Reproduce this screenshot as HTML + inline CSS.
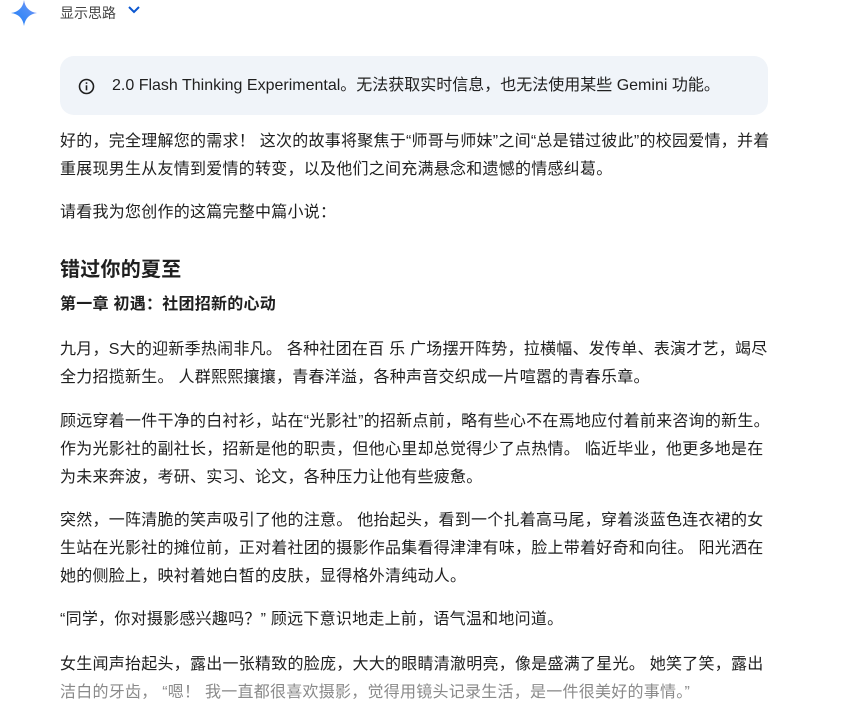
<!DOCTYPE html>
<html><head><meta charset="utf-8"><style>
body{margin:0;width:851px;height:707px;overflow:hidden;background:#fff;font-family:"Liberation Sans","Noto Sans CJK SC",sans-serif;color:#1f1f1f;position:relative}
.l{position:absolute;left:60px;white-space:nowrap;font-size:16px;line-height:28px;letter-spacing:0.25px}
</style></head><body>
<svg style="position:absolute;left:11px;top:0px" width="26" height="26" viewBox="0 0 28 28"><defs><linearGradient id="g" x1="0" y1="1" x2="1" y2="0"><stop offset="0" stop-color="#1c7df5"/><stop offset="0.6" stop-color="#4d8ff7"/><stop offset="1" stop-color="#a48ff0"/></linearGradient></defs><path d="M14 0 C15 8 20 13 28 14 C20 15 15 20 14 28 C13 20 8 15 0 14 C8 13 13 8 14 0Z" fill="url(#g)"/></svg>
<div style="position:absolute;left:60px;top:3px;font-size:14px;line-height:20px;color:#444">显示思路</div>
<svg style="position:absolute;left:127px;top:4px" width="14" height="12" viewBox="0 0 14 12"><path d="M2 3 L7 8 L12 3" fill="none" stroke="#0b57d0" stroke-width="2"/></svg>
<div style="position:absolute;left:60px;top:56px;width:708px;height:59px;background:#f0f4f9;border-radius:14px"></div>
<svg style="position:absolute;left:78px;top:78px" width="17" height="17" viewBox="0 0 17 17"><circle cx="8.5" cy="8.5" r="7" fill="none" stroke="#1f1f1f" stroke-width="1.6"/><rect x="7.7" y="7.3" width="1.6" height="5" fill="#1f1f1f"/><rect x="7.7" y="4.3" width="1.6" height="1.6" fill="#1f1f1f"/></svg>
<div class="l" style="left:112px;top:72px;font-size:16px;letter-spacing:0">2.0 Flash Thinking Experimental。无法获取实时信息，也无法使用某些 Gemini 功能。</div>
<div class="l" style="top:128px">好的，完全理解您的需求！ 这次的故事将聚焦于“师哥与师妹”之间“总是错过彼此”的校园爱情，并着</div>
<div class="l" style="top:156px">重展现男生从友情到爱情的转变，以及他们之间充满悬念和遗憾的情感纠葛。</div>
<div class="l" style="top:199px">请看我为您创作的这篇完整中篇小说：</div>
<div class="l" style="top:256px;font-size:20px;font-weight:bold">错过你的夏至</div>
<div class="l" style="top:291px;font-size:16px;font-weight:bold">第一章 初遇：社团招新的心动</div>
<div class="l" style="top:336px">九月，S大的迎新季热闹非凡。 各种社团在百 乐 广场摆开阵势，拉横幅、发传单、表演才艺，竭尽</div>
<div class="l" style="top:364px">全力招揽新生。 人群熙熙攘攘，青春洋溢，各种声音交织成一片喧嚣的青春乐章。</div>
<div class="l" style="top:408px">顾远穿着一件干净的白衬衫，站在“光影社”的招新点前，略有些心不在焉地应付着前来咨询的新生。</div>
<div class="l" style="top:436px">作为光影社的副社长，招新是他的职责，但他心里却总觉得少了点热情。 临近毕业，他更多地是在</div>
<div class="l" style="top:464px">为未来奔波，考研、实习、论文，各种压力让他有些疲惫。</div>
<div class="l" style="top:507px">突然，一阵清脆的笑声吸引了他的注意。 他抬起头，看到一个扎着高马尾，穿着淡蓝色连衣裙的女</div>
<div class="l" style="top:535px">生站在光影社的摊位前，正对着社团的摄影作品集看得津津有味，脸上带着好奇和向往。 阳光洒在</div>
<div class="l" style="top:563px">她的侧脸上，映衬着她白皙的皮肤，显得格外清纯动人。</div>
<div class="l" style="top:606px">“同学，你对摄影感兴趣吗？” 顾远下意识地走上前，语气温和地问道。</div>
<div class="l" style="top:651px">女生闻声抬起头，露出一张精致的脸庞，大大的眼睛清澈明亮，像是盛满了星光。 她笑了笑，露出</div>
<div class="l" style="top:679px;color:#8a8a8a">洁白的牙齿， “嗯！ 我一直都很喜欢摄影，觉得用镜头记录生活，是一件很美好的事情。”</div>
</body></html>
